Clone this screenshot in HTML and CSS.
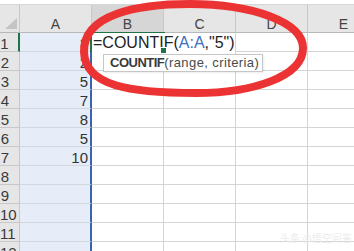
FILE: index.html
```html
<!DOCTYPE html>
<html lang="zh-CN">
<head>
  <meta charset="UTF-8">
  <title>COUNTIF</title>
  <link rel="stylesheet" href="styles.css">
</head>
<body>
  <div class="sheet">
    <div class="topbar"></div>
    <div class="grid">
      <div class="corner"><span class="tri"></span></div>
      <div class="ch">A</div><div class="ch active">B</div><div class="ch">C</div><div class="ch">D</div><div class="ch">E</div>

      <div class="rh cur">1</div><div class="ca">3</div><div class="c"></div><div class="c"></div><div class="c"></div><div class="c"></div>
      <div class="rh">2</div><div class="ca">2</div><div class="c"></div><div class="c"></div><div class="c"></div><div class="c"></div>
      <div class="rh">3</div><div class="ca">5</div><div class="c"></div><div class="c"></div><div class="c"></div><div class="c"></div>
      <div class="rh">4</div><div class="ca">7</div><div class="c"></div><div class="c"></div><div class="c"></div><div class="c"></div>
      <div class="rh">5</div><div class="ca">8</div><div class="c"></div><div class="c"></div><div class="c"></div><div class="c"></div>
      <div class="rh">6</div><div class="ca">5</div><div class="c"></div><div class="c"></div><div class="c"></div><div class="c"></div>
      <div class="rh">7</div><div class="ca">10</div><div class="c"></div><div class="c"></div><div class="c"></div><div class="c"></div>
      <div class="rh">8</div><div class="ca"></div><div class="c"></div><div class="c"></div><div class="c"></div><div class="c"></div>
      <div class="rh">9</div><div class="ca"></div><div class="c"></div><div class="c"></div><div class="c"></div><div class="c"></div>
      <div class="rh">10</div><div class="ca"></div><div class="c"></div><div class="c"></div><div class="c"></div><div class="c"></div>
      <div class="rh">11</div><div class="ca"></div><div class="c"></div><div class="c"></div><div class="c"></div><div class="c"></div>
      <div class="rh">12</div><div class="ca"></div><div class="c"></div><div class="c"></div><div class="c"></div><div class="c"></div>
    </div>

    <div class="editor"><span class="ftext">=COUNTIF(<span class="ref">A:A</span>,"5")</span><span class="handle"></span></div>
    <div class="tip"><b>COUNTIF</b><span class="args">(range, criteria)</span></div>

    <svg class="mark" width="354" height="251" viewBox="0 0 354 251">
      <path d="M 84 52 C 83 14, 138 4, 190 4 C 252 4, 303 22, 303 48 C 303 77, 252 93, 196 93 C 130 93, 85 86, 84 52 Z" fill="none" stroke="#ec3333" stroke-width="8"/>
    </svg>

    <div class="wm">头条 @悟空问答</div>
  </div>
</body>
</html>
```

FILE: styles.css
```css
body { margin: 0; background: #fff; overflow: hidden; font-family: "Liberation Sans", Arial, sans-serif; }
.sheet { position: relative; width: 354px; height: 251px; overflow: hidden; }
.topbar { height: 4px; border-bottom: 1px solid #d6d6d6; background: #fff; }

.grid { display: grid; grid-template-columns: 20px 72px 72px 72px 72px 72px; grid-template-rows: 28px repeat(12, 19px); }
.grid > div { box-sizing: border-box; }

.corner { background: #e6e6e6; border-right: 1px solid #c8c8c8; border-bottom: 1px solid #b8b8b8; position: relative; }
.tri { position: absolute; left: 5px; top: 13px; width: 0; height: 0; border-left: 12px solid transparent; border-bottom: 11px solid #c4c4c4; }

.ch { background: #e6e6e6; border-right: 1px solid #c8c8c8; border-bottom: 1px solid #b8b8b8; text-align: center; font-size: 14px; line-height: 16px; padding-top: 11px; color: #444; }
.ch.active { background: #d6d6d6; }

.rh { background: #e6e6e6; border-right: 1px solid #c8c8c8; border-bottom: 1px solid #c8c8c8; font-size: 15px; line-height: 16px; padding: 3px 9px 0 0; text-align: center; color: #3a3a3a; white-space: nowrap; }
.rh.cur { border-right: 2px solid #217346; }

.ca { background: #e6edf8; border-right: 2px solid #3a64ad; border-bottom: 1px solid #d2d7de; font-size: 15px; line-height: 16px; padding: 3px 2px 0 0; text-align: right; color: #333; }
.c { border-right: 1px solid #d4d4d4; border-bottom: 1px solid #d4d4d4; }

.editor { position: absolute; left: 90px; top: 32px; width: 75px; height: 20px; box-sizing: border-box; border: 2px solid #217346; background: #fff; white-space: nowrap; overflow: visible; }
.ftext { display: inline-block; background: #fff; font-size: 16px; line-height: 19px; padding-left: 1px; margin-top: -2px; color: #222; }
.ref { color: #3e6ec0; }
.handle { position: absolute; right: -4px; bottom: -4px; width: 5px; height: 5px; background: #217346; border: 1px solid #fff; }

.tip { position: absolute; left: 103px; top: 54px; width: 160px; height: 18px; box-sizing: border-box; border: 1px solid #c6c6c6; background: #fff; padding-left: 6px; font-size: 13px; line-height: 16px; color: #4a4a4a; white-space: nowrap; box-shadow: 1px 1px 2px rgba(0,0,0,0.08); }
.tip b { color: #3a3a3a; letter-spacing: -0.5px; }
.args { letter-spacing: 0.4px; }

.mark { position: absolute; left: 0; top: 0; pointer-events: none; }

.wm { position: absolute; left: 280px; top: 232px; font-size: 10px; line-height: 12px; color: #ececec; font-family: "Noto Sans CJK SC", sans-serif; white-space: nowrap; }
```
